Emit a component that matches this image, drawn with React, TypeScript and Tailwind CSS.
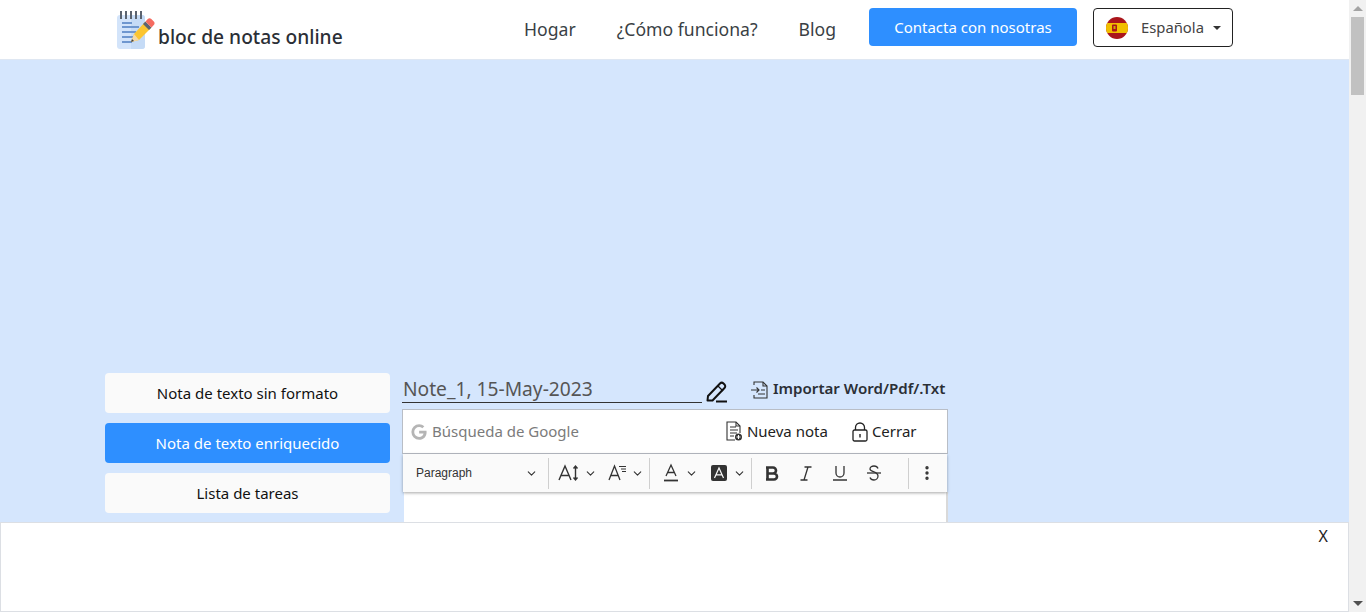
import { ChevronDown, EllipsisVertical } from "lucide-react";

function Logo() {
  return (
    <svg width="38" height="38" viewBox="0 0 38 38" className="shrink-0">
      <rect x="0" y="4" width="28" height="34" rx="3" fill="#d3e4fa" />
      <path d="M14 4h11a3 3 0 0 1 3 3v28a3 3 0 0 1-3 3H14z" fill="#c5dbf6" />
      <g fill="#5c6470">
        <rect x="3" y="0" width="2" height="8" />
        <rect x="8" y="0" width="2" height="8" />
        <rect x="13" y="0" width="2" height="8" />
        <rect x="18" y="0" width="2" height="8" />
        <rect x="23" y="0" width="2" height="8" />
      </g>
      <g fill="#6f97cf">
        <rect x="5" y="11" width="10" height="2" />
        <rect x="5" y="15" width="17" height="2" />
        <rect x="5" y="20" width="14" height="2" />
        <rect x="5" y="25" width="12" height="2" />
        <rect x="5" y="30" width="10" height="2" />
      </g>
      <path d="M14 31l3-8 11-12 6 6-12 12z" fill="#fbc531" />
      <path d="M14 31l3-8 5 6z" fill="#f4d9a8" />
      <path d="M14 31l1-3 2 2z" fill="#444" />
      <path d="M26 13l6 6 2.500-2.500-6-6z" fill="#5c6470" />
      <path d="M28.500 10.500l6 6 2.300-2.500c1-1 1-2.500 0-3.500l-2.500-2.500c-1-1-2.500-1-3.500 0z" fill="#f56b60" />
    </svg>
  );
}

function SpainFlag() {
  return (
    <svg width="22" height="22" viewBox="0 0 22 22" className="shrink-0">
      <clipPath id="flag">
        <circle cx="11" cy="11" r="11" />
      </clipPath>
      <g clipPath="url(#flag)">
        <rect width="22" height="22" fill="#aa151b" />
        <rect y="6" width="22" height="10" fill="#f1bf00" />
        <rect x="6" y="7.500" width="5" height="7" rx="1" fill="#ad1519" />
        <rect x="7.500" y="9" width="2" height="3" fill="#c8b100" />
      </g>
    </svg>
  );
}

function PencilIcon() {
  return (
    <svg width="24" height="22" viewBox="0 0 24 22" fill="none" stroke="#111" strokeWidth="2" className="shrink-0">
      <path d="M3 15L15 2.500c1-1 2.500-1 3.500 0l1 1c1 1 1 2.500 0 3.500L7.500 19.500H2.500z" strokeLinejoin="round" />
      <path d="M13 5l5 5" strokeWidth="1.200" />
      <path d="M11 20.500h11" />
    </svg>
  );
}

function ImportIcon() {
  return (
    <svg width="19" height="19" viewBox="0 0 19 19" fill="none" stroke="#333" strokeWidth="1.100" className="shrink-0">
      <path d="M4 5V2h9l4 4v12H4v-3" />
      <path d="M13 2v4h4" />
      <path d="M1 10h8M6.500 7.500L9 10l-2.500 2.500" />
      <path d="M11 10h4M8 14h7" />
    </svg>
  );
}

function NewNoteIcon() {
  return (
    <svg width="18" height="21" viewBox="0 0 18 21" fill="none" stroke="#333" strokeWidth="1.100" className="shrink-0">
      <path d="M10 19H2V1h9l4 4v7" />
      <path d="M11 1v4h4M5 6h6M5 9h8M5 12h7M5 15h4" />
      <circle cx="13.500" cy="16" r="3.500" fill="#333" stroke="none" />
      <path d="M11.500 16h4M13.500 14v4" stroke="#fff" />
    </svg>
  );
}

function LockIcon() {
  return (
    <svg width="16" height="20" viewBox="0 0 16 20" fill="none" stroke="#222" strokeWidth="1.300" className="shrink-0">
      <path d="M3.500 8V5.500a4.500 4.500 0 0 1 9 0V8" />
      <rect x="1" y="8" width="14" height="11" rx="1.500" />
      <rect x="7.300" y="12" width="1.400" height="3.500" fill="#222" stroke="none" />
    </svg>
  );
}

function GoogleG() {
  return (
    <svg width="16" height="16" viewBox="0 0 24 24" fill="#b5b5b5" className="shrink-0">
      <path d="M12.200 10.200v4h6.600c-.6 3-3.200 5.200-6.600 5.200a7.400 7.400 0 0 1 0-14.800c1.900 0 3.500.7 4.800 1.800l3-3A11.600 11.600 0 0 0 12.200.4a11.600 11.600 0 1 0 0 23.200c6.700 0 11.200-4.700 11.200-11.300 0-.7-.1-1.400-.2-2.100z" />
    </svg>
  );
}

function Divider() {
  return <div className="w-px h-[31px] bg-[#cfcfcf] shrink-0" />;
}

function Caret() {
  return <ChevronDown size={13} strokeWidth={2} className="text-[#333] shrink-0" />;
}

const modes = [
  { label: "Nota de texto sin formato", active: false },
  { label: "Nota de texto enriquecido", active: true },
  { label: "Lista de tareas", active: false },
];

export default function App() {
  return (
    <div className="relative flex h-[612px] overflow-hidden bg-[#d5e6fd] font-['Noto_Sans',sans-serif]">
      <div className="w-[1349px] shrink-0">
        <header className="h-[60px] bg-white flex items-start pt-[8px] pl-[117px] pr-[116px] border-b border-[#dfe7f2]">
          <a className="flex items-start text-[19.2px] font-medium text-[#2b2f36] leading-none mt-[3px]">
            <Logo />
            <span className="ml-[3px] mt-[16px]">bloc de notas online</span>
          </a>
          <nav className="ml-auto flex items-start text-[17.6px] text-[#3a3f45]">
            <a className="mr-[41px] mt-[8px]">Hogar</a>
            <a className="mr-[41px] mt-[8px]">¿Cómo funciona?</a>
            <a className="mr-[33px] mt-[8px]">Blog</a>
            <button className="w-[208px] h-[38px] rounded bg-[#2e8fff] text-white text-[15px] mr-[16px]">
              Contacta con nosotras
            </button>
            <button className="w-[140px] h-[39px] rounded border border-[#222] flex items-center pl-[12px] text-[14.8px] text-[#444]">
              <SpainFlag />
              <span className="ml-[13px]">Española</span>
              <span className="ml-[9px] border-x-[4px] border-x-transparent border-t-[4px] border-t-[#333]" />
            </button>
          </nav>
        </header>

        <main className="flex pt-[313px] pl-[105px]">
          <aside className="w-[285px] flex flex-col gap-[10px]">
            {modes.map((m) => (
              <button
                key={m.label}
                className={`h-[40px] rounded text-[15px] ${m.active ? "bg-[#2e8fff] text-white" : "bg-[#fafafa] text-[#111]"}`}
              >
                {m.label}
              </button>
            ))}
          </aside>

          <section className="w-[546px] ml-[12px]">
            <div className="flex items-start h-[36px]">
              <div className="w-[300px] h-[30px] border-b border-[#333] text-[19.2px] leading-[31px] text-[#555] pl-[1px]">
                Note_1, 15-May-2023
              </div>
              <span className="ml-[3px] mt-[8px]">
                <PencilIcon />
              </span>
              <span className="ml-[21px] mt-[7px]">
                <ImportIcon />
              </span>
              <span className="ml-[4px] mt-[4px] text-[15.1px] font-semibold text-[#2b2f36] whitespace-nowrap">
                Importar Word/Pdf/.Txt
              </span>
            </div>

            <div className="h-[45px] bg-white border border-[#b9bec6] flex items-center pl-[8px]">
              <GoogleG />
              <span className="ml-[5px] text-[15px] text-[#7b7b7b]">Búsqueda de Google</span>
              <span className="ml-[146px]">
                <NewNoteIcon />
              </span>
              <span className="ml-[4px] text-[15px] text-[#222]">Nueva nota</span>
              <span className="ml-[24px]">
                <LockIcon />
              </span>
              <span className="ml-[4px] text-[15px] text-[#222]">Cerrar</span>
            </div>

            <div className="mx-[1px] h-[38px] bg-[#fafafa] flex items-center shadow-[0_1px_3px_rgba(0,0,0,0.35)] relative text-[#333]">
              <span className="ml-[13px] w-[109px] font-['Liberation_Sans',sans-serif] text-[12px]">Paragraph</span>
              <Caret />
              <span className="ml-[10px]">
                <Divider />
              </span>
              <svg width="22" height="18" viewBox="0 0 22 18" fill="none" stroke="#333" strokeWidth="1.400" className="ml-[9px] shrink-0">
                <path d="M1 16L7 2l6 14M3 11.500h8" />
                <path d="M17.500 2v14M15.500 4.500l2-2.500 2 2.500M15.500 13.500l2 2.500 2-2.500" />
              </svg>
              <span className="ml-[4px]">
                <Caret />
              </span>
              <svg width="20" height="18" viewBox="0 0 20 18" fill="none" stroke="#333" strokeWidth="1.300" className="ml-[11px] shrink-0">
                <path d="M1 16L6.500 2 12 16M3 11.500h7" />
                <path d="M11 2.500h7M13 5h5M14 7.500h4" strokeWidth="1" />
              </svg>
              <span className="ml-[3px]">
                <Caret />
              </span>
              <span className="ml-[5px]">
                <Divider />
              </span>
              <svg width="16" height="20" viewBox="0 0 16 20" fill="none" stroke="#333" strokeWidth="1.300" className="ml-[13px] shrink-0">
                <path d="M3 13L8 2l5 11M4.500 9.500h7" />
                <path d="M1 17.500h14" strokeWidth="1.800" />
              </svg>
              <span className="ml-[6px]">
                <Caret />
              </span>
              <svg width="16" height="16" viewBox="0 0 16 16" className="ml-[13px] shrink-0">
                <rect width="16" height="16" rx="2" fill="#333" />
                <path d="M3.500 13L8 3l4.500 10M5 9.800h6" fill="none" stroke="#fafafa" strokeWidth="1.200" />
              </svg>
              <span className="ml-[6px]">
                <Caret />
              </span>
              <span className="ml-[5px]">
                <Divider />
              </span>
              <span className="w-[34px] ml-[3px] flex justify-center">
                <svg width="14" height="15" viewBox="0 0 14 15" fill="none" stroke="#333" strokeWidth="2.600">
                  <path d="M2.500 1.500v12M1 1.500h7a3 3 0 0 1 0 6H2.500M2.500 7.500h6.500a3 3 0 0 1 0 6H1" />
                </svg>
              </span>
              <span className="w-[34px] flex justify-center">
                <svg width="12" height="15" viewBox="0 0 12 15" fill="none" stroke="#333" strokeWidth="1.300">
                  <path d="M8 1L4 14M4.500 1h7M.5 14h7" />
                </svg>
              </span>
              <span className="w-[34px] flex justify-center">
                <svg width="14" height="16" viewBox="0 0 14 16" fill="none" stroke="#333" strokeWidth="1.300">
                  <path d="M3 1v7a4 4 0 0 0 8 0V1" />
                  <path d="M0 15h14" strokeWidth="1.500" />
                </svg>
              </span>
              <span className="w-[34px] flex justify-center">
                <svg width="14" height="16" viewBox="0 0 14 16" fill="none" stroke="#333" strokeWidth="1.300">
                  <path d="M11 3.500C10.500 2 9 1 7 1 4.800 1 3 2.200 3 4c0 3 8 2.500 8 7 0 2.200-1.800 4-4 4-2 0-3.500-1-4-2.500" />
                  <path d="M0 8h14" />
                </svg>
              </span>
              <span className="ml-[17px]">
                <Divider />
              </span>
              <EllipsisVertical size={18} strokeWidth={2.500} className="ml-[9px] text-[#333]" />
            </div>

            <div className="ml-[2px] h-[200px] bg-white border-r-2 border-[#d9d9d9]" />
          </section>
        </main>
      </div>

      <div className="w-[17px] shrink-0 bg-[#f1f1f1] flex flex-col items-center">
        <span className="mt-[6px] border-x-[5px] border-x-transparent border-b-[5px] border-b-[#a3a3a3]" />
        <div className="mt-[6px] w-[13px] h-[78px] bg-[#c1c1c1]" />
        <span className="mt-auto mb-[6px] border-x-[5px] border-x-transparent border-t-[5px] border-t-[#505050]" />
      </div>

      {/* bottom ad strip, sits over the page */}
      <div className="absolute left-0 bottom-0 w-[1349px] h-[90px] bg-white border border-[#dcdfe4] flex justify-end">
        <span className="mr-[20px] mt-[1px] text-[16px] text-[#222]">X</span>
      </div>
    </div>
  );
}
